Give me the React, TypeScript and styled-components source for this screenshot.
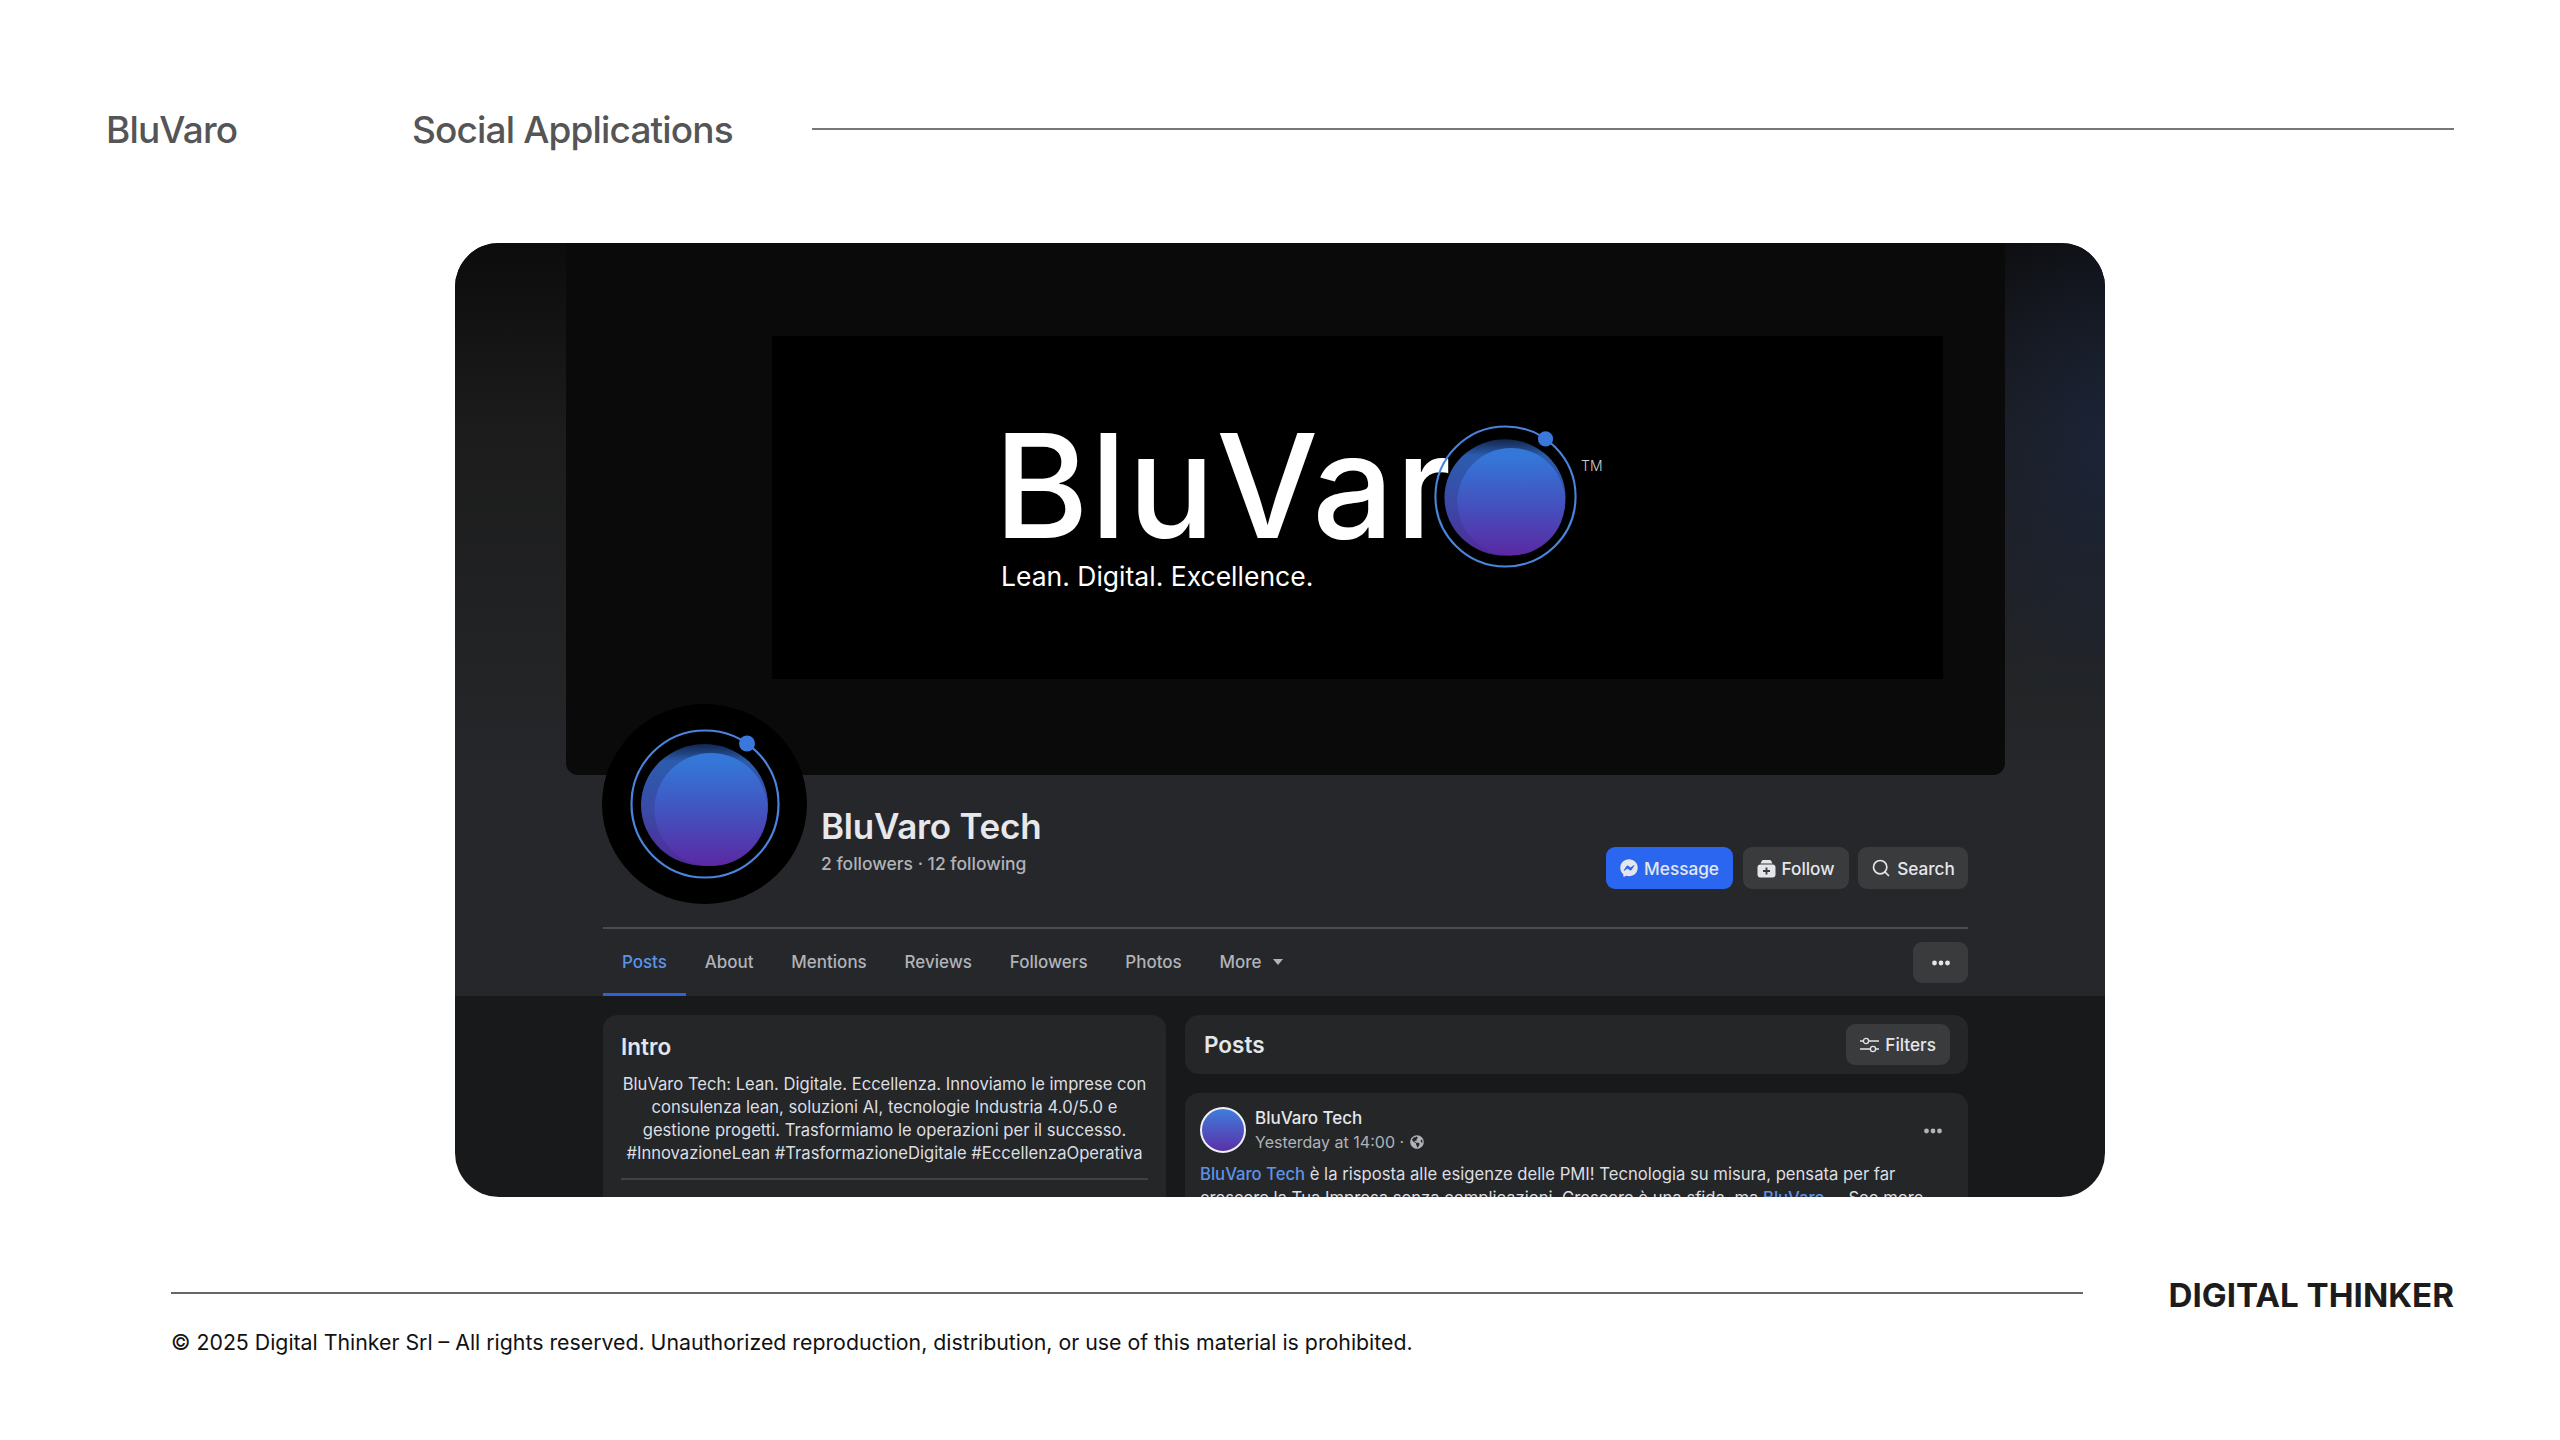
import React from "react";
import styled, { createGlobalStyle } from "styled-components";
import { FaFacebookMessenger, FaGlobeAmericas } from "react-icons/fa";
import { Search } from "lucide-react";

const GlobalStyle = createGlobalStyle`
  html, body {
    margin: 0;
    padding: 0;
    background: #ffffff;
  }
  * {
    box-sizing: border-box;
  }
`;

const tabs = ["Posts", "About", "Mentions", "Reviews", "Followers", "Photos"];

const OrbitMark: React.FC<{ size: number; id: string }> = ({ size, id }) => (
  <svg width={size} height={size} viewBox="0 0 150 150" style={{ flexShrink: 0, display: "block" }}>
    <defs>
      <linearGradient id={`${id}-inner`} x1="0" y1="0" x2="0" y2="1">
        <stop offset="0.08" stopColor="#3477d8" />
        <stop offset="0.55" stopColor="#4450bd" />
        <stop offset="1" stopColor="#5b28a3" />
      </linearGradient>
      <linearGradient id={`${id}-outer`} x1="0" y1="0" x2="0" y2="1">
        <stop offset="0" stopColor="#12264c" />
        <stop offset="0.14" stopColor="#2c5cae" />
        <stop offset="0.55" stopColor="#3b4aa6" />
        <stop offset="1" stopColor="#50299a" />
      </linearGradient>
    </defs>
    <circle cx="75" cy="75" r="73.5" fill="none" stroke="#4a84de" strokeWidth="2.2" />
    <ellipse cx="74.5" cy="76" rx="63.5" ry="61" fill={`url(#${id}-outer)`} />
    <circle cx="81" cy="80.5" r="56.5" fill={`url(#${id}-inner)`} />
    <circle cx="117" cy="14.5" r="8" fill="#3a78dc" />
  </svg>
);

const FollowIcon = () => (
  <svg width="19" height="19" viewBox="0 0 19 19">
    <path d="M3.5 4.5 L5 1.6 Q5.4 1 6.2 1 H12.8 Q13.6 1 14 1.6 L15.5 4.5 Z" fill="#e4e6eb" />
    <rect x="0.5" y="5.5" width="18" height="13" rx="3" fill="#e4e6eb" />
    <path d="M9.5 8.5 V15.5 M6 12 H13" stroke="#3a3b3d" strokeWidth="1.8" />
  </svg>
);

const FiltersIcon = () => (
  <svg width="19" height="16" viewBox="0 0 19 16" fill="none" stroke="#e4e6eb" strokeWidth="1.3">
    <path d="M0 4 H3 M9 4 H19 M0 12 H10 M16 12 H19" />
    <circle cx="6" cy="4" r="2.6" />
    <circle cx="13" cy="12" r="2.6" />
  </svg>
);

const Dots = () => (
  <svg width="20" height="6" viewBox="0 0 20 6" fill="currentColor">
    <circle cx="3.5" cy="3" r="2.4" />
    <circle cx="10" cy="3" r="2.4" />
    <circle cx="16.5" cy="3" r="2.4" />
  </svg>
);

export default function App() {
  return (
    <Page>
      <GlobalStyle />
      <Header>
        <Brand>BluVaro</Brand>
        <Section>Social Applications</Section>
        <HeaderRule />
      </Header>

      <Shot>
        <Top>
          <Cover>
            <LogoBox>
              <Wordmark>
                <LogoText>BluVar</LogoText>
                <OrbitMark size={143} id="logo" />
                <Tm>TM</Tm>
              </Wordmark>
              <Tagline>Lean. Digital. Excellence.</Tagline>
            </LogoBox>
          </Cover>
          <Profile>
            <Avatar>
              <OrbitMark size={150} id="avatar" />
            </Avatar>
            <ProfileText>
              <PageName>BluVaro Tech</PageName>
              <PageMeta>2 followers · 12 following</PageMeta>
            </ProfileText>
            <Actions>
              <ActionButton $primary $width={127}>
                <FaFacebookMessenger size={18} />
                Message
              </ActionButton>
              <ActionButton $width={106}>
                <FollowIcon />
                Follow
              </ActionButton>
              <ActionButton $width={110}>
                <Search size={20} strokeWidth={2} />
                Search
              </ActionButton>
            </Actions>
          </Profile>
          <TabBar>
            {tabs.map((tab, index) => (
              <Tab key={tab} $active={index === 0}>
                {tab}
              </Tab>
            ))}
            <Tab>
              More
              <Caret />
            </Tab>
            <MoreButton>
              <Dots />
            </MoreButton>
          </TabBar>
        </Top>

        <Feed>
          <IntroCard>
            <CardTitle>Intro</CardTitle>
            <IntroText>
              BluVaro Tech: Lean. Digitale. Eccellenza. Innoviamo le imprese con
              <br />
              consulenza lean, soluzioni AI, tecnologie Industria 4.0/5.0 e
              <br />
              gestione progetti. Trasformiamo le operazioni per il successo.
              <br />
              #InnovazioneLean #TrasformazioneDigitale #EccellenzaOperativa
            </IntroText>
            <IntroRule />
          </IntroCard>
          <PostColumn>
            <PostsBar>
              <CardTitle>Posts</CardTitle>
              <FilterButton>
                <FiltersIcon />
                Filters
              </FilterButton>
            </PostsBar>
            <PostCard>
              <PostHead>
                <PostAvatar />
                <PostMeta>
                  <PostAuthor>BluVaro Tech</PostAuthor>
                  <PostTime>
                    Yesterday at 14:00 ·
                    <FaGlobeAmericas size={14} />
                  </PostTime>
                </PostMeta>
                <PostMenu>
                  <Dots />
                </PostMenu>
              </PostHead>
              <PostBody>
                <PostLink>BluVaro Tech</PostLink> è la risposta alle esigenze delle PMI! Tecnologia su misura, pensata per far
                <br />
                crescere la Tua Impresa senza complicazioni. Crescere è una sfida, ma <PostLink>BluVaro</PostLink> ... See more
              </PostBody>
            </PostCard>
          </PostColumn>
        </Feed>
      </Shot>

      <Footer>
        <FooterLeft>
          <FooterRule />
          <Copyright>
            © 2025 Digital Thinker Srl – All rights reserved. Unauthorized reproduction, distribution, or use of this material is prohibited.
          </Copyright>
        </FooterLeft>
        <Company>DIGITAL THINKER</Company>
      </Footer>
    </Page>
  );
}

const Page = styled.div`
  display: flex;
  flex-direction: column;
  width: 2560px;
  height: 1440px;
  overflow: hidden;
  background: #ffffff;
  font-family: Inter, "Liberation Sans", sans-serif;
`;

const Header = styled.header`
  display: flex;
  align-items: center;
  height: 48px;
  margin-top: 105px;
  padding: 0 106px 0 106px;
  color: #555555;
`;

const Brand = styled.div`
  width: 306px;
  font-size: 37px;
  font-weight: 500;
  letter-spacing: -0.85px;
`;

const Section = styled.div`
  font-size: 37px;
  font-weight: 500;
  letter-spacing: -0.85px;
`;

const HeaderRule = styled.div`
  flex: 1;
  height: 2px;
  margin-left: 79px;
  margin-top: -1px;
  background: #777777;
`;

const Shot = styled.main`
  flex-shrink: 0;
  width: 1650px;
  height: 954px;
  margin: 90px 0 0 455px;
  border-radius: 44px;
  overflow: hidden;
  background: #18191a;
`;

const Top = styled.div`
  background:
    radial-gradient(190px 280px at 100% 200px, rgba(27, 38, 66, 0.7), rgba(27, 38, 66, 0)),
    linear-gradient(to bottom, #0c0c0c 0, #1c1c1c 190px, #25272a 532px);
`;

const Cover = styled.div`
  height: 532px;
  margin: 0 100px 0 111px;
  padding: 93px 62px 96px 206px;
  border-radius: 0 0 12px 12px;
  background: #0a0a0a;
`;

const LogoBox = styled.div`
  display: flex;
  flex-direction: column;
  height: 100%;
  padding: 89px 0 0 222px;
  background: #000000;
`;

const Wordmark = styled.div`
  display: flex;
  align-items: flex-start;
  height: 143px;
`;

const LogoText = styled.div`
  width: 440px;
  margin-top: 6px;
  font-size: 144px;
  line-height: 110px;
  font-weight: 500;
  letter-spacing: 1.6px;
  color: #ffffff;
`;

const Tm = styled.div`
  margin: 33px 0 0 4px;
  font-size: 14px;
  line-height: 16px;
  font-weight: 300;
  color: #cfcfcf;
`;

const Tagline = styled.div`
  margin: -8px 0 0 7px;
  font-size: 26.5px;
  line-height: 32px;
  font-weight: 400;
  color: #ffffff;
`;

const Profile = styled.div`
  position: relative;
  display: flex;
  justify-content: space-between;
  align-items: flex-end;
  height: 152px;
  margin: 0 137px 0 148px;
  padding: 0 0 38px 218px;
`;

const Avatar = styled.div`
  position: absolute;
  left: -1px;
  top: -71px;
  display: flex;
  align-items: center;
  justify-content: center;
  width: 205px;
  height: 200px;
  border-radius: 50%;
  background: #000000;
`;

const ProfileText = styled.div`
  display: flex;
  flex-direction: column;
  gap: 6px;
  margin-bottom: 14px;
`;

const PageName = styled.div`
  font-size: 35px;
  line-height: 42px;
  font-weight: 600;
  letter-spacing: -0.25px;
  color: #e7e8ec;
`;

const PageMeta = styled.div`
  font-size: 17.5px;
  line-height: 22px;
  font-weight: 500;
  color: #b0b3b8;
`;

const Actions = styled.div`
  display: flex;
  gap: 9.5px;
`;

const ActionButton = styled.div<{ $primary?: boolean; $width: number }>`
  display: flex;
  align-items: center;
  justify-content: center;
  gap: 6px;
  width: ${({ $width }) => $width}px;
  height: 42px;
  border-radius: 9px;
  background: ${({ $primary }) => ($primary ? "#2b66f0" : "#3a3b3d")};
  color: #e4e6eb;
  font-size: 17.2px;
  font-weight: 500;
`;

const TabBar = styled.nav`
  display: flex;
  align-items: center;
  height: 69px;
  margin: 0 137px 0 148px;
  border-top: 2px solid #4b4c4e;
`;

const Tab = styled.div<{ $active?: boolean }>`
  display: flex;
  align-items: center;
  gap: 11px;
  height: 100%;
  padding: 2px 18.9px 0;
  border-bottom: 3px solid ${({ $active }) => ($active ? "#2f62d8" : "transparent")};
  color: ${({ $active }) => ($active ? "#5d93e6" : "#b0b3b8")};
  font-size: 17px;
  font-weight: 500;
`;

const Caret = styled.span`
  width: 0;
  height: 0;
  border-left: 5px solid transparent;
  border-right: 5px solid transparent;
  border-top: 6px solid #b0b3b8;
`;

const MoreButton = styled.div`
  display: flex;
  align-items: center;
  justify-content: center;
  width: 55px;
  height: 41px;
  margin-left: auto;
  border-radius: 9px;
  background: #3a3b3d;
  color: #e4e6eb;
`;

const Feed = styled.div`
  display: grid;
  grid-template-columns: 563px 783px;
  gap: 19px;
  padding: 19px 137px 0 148px;
`;

const IntroCard = styled.section`
  height: 300px;
  padding: 18px 18px 0 18px;
  border-radius: 14px;
  background: #252628;
`;

const CardTitle = styled.h2`
  margin: 0;
  font-size: 22.5px;
  line-height: 28px;
  font-weight: 600;
  color: #e4e6eb;
`;

const IntroText = styled.p`
  margin: 12px -4px 0;
  font-size: 16.6px;
  line-height: 23px;
  text-align: center;
  white-space: nowrap;
  color: #dcdee2;
`;

const IntroRule = styled.div`
  height: 2px;
  margin-top: 13px;
  background: #414244;
`;

const PostColumn = styled.div`
  display: flex;
  flex-direction: column;
  gap: 19px;
`;

const PostsBar = styled.section`
  display: flex;
  align-items: center;
  justify-content: space-between;
  height: 59px;
  padding: 0 18px 0 19px;
  border-radius: 14px;
  background: #252628;
`;

const FilterButton = styled.div`
  display: flex;
  align-items: center;
  gap: 6px;
  height: 41px;
  padding: 0 14px;
  border-radius: 9px;
  background: #3a3b3d;
  color: #e4e6eb;
  font-size: 17.2px;
  font-weight: 500;
`;

const PostCard = styled.article`
  height: 300px;
  padding: 14px 15px 0;
  border-radius: 14px;
  background: #252628;
`;

const PostHead = styled.div`
  display: flex;
  align-items: flex-start;
  gap: 9px;
`;

const PostAvatar = styled.div`
  width: 46px;
  height: 46px;
  border: 2px solid #f0f0f5;
  border-radius: 50%;
  background: linear-gradient(to bottom, #3f7ddc, #5b30a8);
`;

const PostMeta = styled.div`
  display: flex;
  flex-direction: column;
  flex: 1;
  gap: 3px;
`;

const PostAuthor = styled.div`
  font-size: 17px;
  line-height: 22px;
  font-weight: 500;
  color: #e4e6eb;
`;

const PostTime = styled.div`
  display: flex;
  align-items: center;
  gap: 6px;
  font-size: 16px;
  line-height: 20px;
  color: #b0b3b8;
`;

const PostMenu = styled.div`
  margin: 11px 10px 0 0;
  color: #b0b3b8;
`;

const PostBody = styled.p`
  margin: 9px 0 0;
  font-size: 16.65px;
  line-height: 24px;
  white-space: nowrap;
  color: #dcdee2;
`;

const PostLink = styled.span`
  font-weight: 500;
  color: #5d93e6;
`;

const Footer = styled.footer`
  display: flex;
  justify-content: space-between;
  align-items: flex-start;
  margin-top: 95px;
  padding: 0 106px 0 171px;
`;

const FooterLeft = styled.div`
  display: flex;
  flex-direction: column;
  width: 1912px;
`;

const FooterRule = styled.div`
  height: 2px;
  background: #666666;
`;

const Copyright = styled.div`
  margin-top: 34px;
  font-size: 21.3px;
  line-height: 28px;
  color: #111111;
`;

const Company = styled.div`
  margin-top: -17px;
  font-size: 33.2px;
  line-height: 40px;
  font-weight: 700;
  color: #1c1c1c;
`;
